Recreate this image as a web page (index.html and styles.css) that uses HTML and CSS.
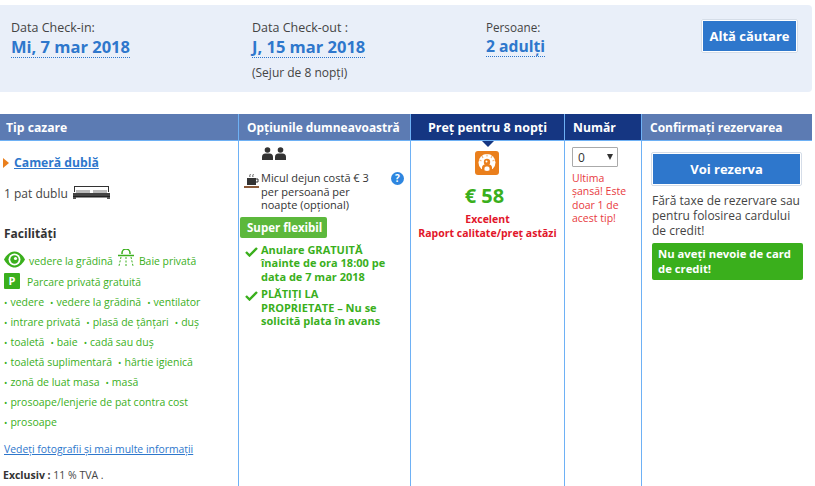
FILE: index.html
```html
<!DOCTYPE html>
<html lang="ro">
<head>
<meta charset="utf-8">
<title>Rezervare</title>
<link rel="stylesheet" href="styles.css">
</head>
<body>
<section class="search">
  <div class="s-col s-in"><div class="s-label">Data Check-in:</div><div class="s-val"><span>Mi, 7 mar 2018</span></div></div>
  <div class="s-col s-out"><div class="s-label">Data Check-out :</div><div class="s-val"><span>J, 15 mar 2018</span></div><div class="s-note">(Sejur de 8 nopți)</div></div>
  <div class="s-col s-pers"><div class="s-label">Persoane:</div><div class="s-val"><span>2 adulţi</span></div></div>
  <button class="btn btn-search">Altă căutare</button>
</section>
<section class="table">
  <div class="th c1">Tip cazare</div>
  <div class="th c2">Opțiunile dumneavoastră</div>
  <div class="th c3 dark">Preţ pentru 8 nopţi</div>
  <div class="th c4 dark">Număr</div>
  <div class="th c5">Confirmați rezervarea</div>

  <div class="td c1">
    <div class="room"><span class="tri"></span><a href="#">Cameră dublă</a></div>
    <div class="bed">1 pat dublu
      <svg class="bed-ico" width="39" height="14" viewBox="0 0 39 14"><path d="M2 1h35v6h-1V2H3v5H2z" fill="#333"/><path d="M4 5h14v3H4zM21 5h14v3H21z" fill="#bbb"/><path d="M1 8h37v3H1z" fill="#444"/><path d="M1 11h37v1.500H1z" fill="#222"/><path d="M1 12h3v2H1zM35 12h3v2h-3z" fill="#555"/></svg>
    </div>
    <h4 class="fac-title">Facilități</h4>
    <div class="fac-top">
      <svg class="eye" width="21" height="17" viewBox="0 0 21 17"><path d="M0 8.500C3 3 7 .5 10.500 .5S18 3 21 8.500c-3 5.500-7 8-10.500 8S3 14 0 8.500z" fill="#3aaf1c"/><circle cx="10.500" cy="8.500" r="6" fill="#fff"/><circle cx="10.500" cy="8.500" r="4.200" fill="#3aaf1c"/><circle cx="11.500" cy="7.500" r="1.600" fill="#fff"/></svg>
      <span>vedere la grădină</span>
      <svg class="shower" width="16" height="18" viewBox="0 0 16 18"><path d="M4 5V4a4 4 0 0 1 8 0v1" fill="none" stroke="#3aaf1c" stroke-width="1.500"/><path d="M0 6.500h16" stroke="#3aaf1c" stroke-width="1.500"/><path d="M3 8l-2 9M8 8v9M13 8l2 9" stroke="#3aaf1c" stroke-dasharray="2 1.500" fill="none"/></svg>
      <span>Baie privată</span>
    </div>
    <div class="fac-top park"><span class="p-badge">P</span><span>Parcare privată gratuită</span></div>
    <ul class="fac-list">
      <li><i>vedere</i><i>vedere la grădină</i><i>ventilator</i></li>
      <li><i>intrare privată</i><i>plasă de ţânţari</i><i>duş</i></li>
      <li><i>toaletă</i><i>baie</i><i>cadă sau duş</i></li>
      <li><i>toaletă suplimentară</i><i>hârtie igienică</i></li>
      <li><i>zonă de luat masa</i><i>masă</i></li>
      <li><i>prosoape/lenjerie de pat contra cost</i></li>
      <li><i>prosoape</i></li>
    </ul>
    <a class="more" href="#">Vedeți fotografii și mai multe informații</a>
    <div class="tax"><b>Exclusiv :</b> 11 % TVA .</div>
  </div>

  <div class="td c2">
    <div class="people">
      <svg width="24" height="14" viewBox="0 0 24 14"><circle cx="5.500" cy="3" r="2.800" fill="#333"/><path d="M0 13v-3a3.500 3.500 0 0 1 3.500-3.500h4A3.500 3.500 0 0 1 11 10v3z" fill="#333"/><circle cx="18.500" cy="3" r="2.800" fill="#333"/><path d="M13 13v-3a3.500 3.500 0 0 1 3.500-3.500h4A3.500 3.500 0 0 1 24 10v3z" fill="#333"/></svg>
    </div>
    <div class="breakfast">
      <svg class="cup" width="15" height="15" viewBox="0 0 15 15"><path d="M6 0c1 1-1 1 0 3M9 0c1 1-1 1 0 3" stroke="#555" fill="none"/><path d="M3 4h9v7H3z" fill="#333"/><path d="M12 5h2v3h-2" fill="none" stroke="#333"/><path d="M0 12h15v2H0z" fill="#8a5a3a"/></svg>
      <span class="b-text">Micul dejun costă € 3 per persoană per noapte (opţional)</span>
      <span class="help">?</span>
    </div>
    <div class="flex-badge">Super flexibil</div>
    <div class="perk"><svg class="check" width="13" height="11" viewBox="0 0 13 11"><path d="M1 6l3.500 3.500L12 2" fill="none" stroke="#3aaf1c" stroke-width="2.400"/></svg><span>Anulare GRATUITĂ înainte de ora 18:00 pe data de 7 mar 2018</span></div>
    <div class="perk"><svg class="check" width="13" height="11" viewBox="0 0 13 11"><path d="M1 6l3.500 3.500L12 2" fill="none" stroke="#3aaf1c" stroke-width="2.400"/></svg><span>PLĂTIȚI LA PROPRIETATE – Nu se solicită plata în avans</span></div>
  </div>

  <div class="td c3">
    <span class="notch"></span>
    <svg class="deal" width="24" height="24" viewBox="0 0 24 24"><rect width="24" height="24" rx="3" fill="#ea7f1c"/><circle cx="12" cy="11.500" r="8.500" fill="#fff"/><path d="M12 3.500v2M7 5l1 2M17 5l-1 2M4.500 9l2 1M19.500 9l-2 1" stroke="#f3b77d" stroke-width="1.200"/><circle cx="12" cy="11" r="3.200" fill="#ea7f1c"/><circle cx="11.500" cy="10.500" r="1" fill="#fff"/><path d="M7 20v-3.500C7 14.500 9 13 12 13s5 1.500 5 3.500V20h-2.500v-3c0-.8-1-1.500-2.500-1.500S9.500 16.200 9.500 17v3z" fill="#ea7f1c"/></svg>
    <div class="price">€ 58</div>
    <div class="excel">Excelent<br>Raport calitate/preț astăzi</div>
  </div>

  <div class="td c4">
    <div class="select"><span>0</span><span class="arrow"></span></div>
    <div class="last">Ultima șansă! Este doar 1 de acest tip!</div>
  </div>

  <div class="td c5">
    <button class="btn btn-book">Voi rezerva</button>
    <div class="nofee">Fără taxe de rezervare sau pentru folosirea cardului de credit!</div>
    <div class="nocard">Nu aveţi nevoie de card de credit!</div>
  </div>
</section>
</body>
</html>
```
FILE: styles.css
```css
* { box-sizing: border-box; }
html, body { height: 100%; }
body {
  margin: 0;
  padding-top: 5px;
  background: #fff;
  font-family: "Open Sans", "Noto Sans", sans-serif;
  font-size: 12px;
  color: #333;
  overflow: hidden;
}
.search {
  display: flex;
  width: 812px;
  height: 87px;
  background: #e9eff9;
  border-radius: 0 4px 4px 0;
  padding: 14px 14px 0 11px;
}
.s-col { flex: none; }
.s-in { width: 241px; }
.s-out { width: 234px; }
.s-pers { width: 215px; }
.s-pers .s-label { font-size: 11.700px; }
.s-pers .s-val { font-size: 15.700px; }
.s-label { font-size: 12.500px; line-height: 17px; color: #444; }
.s-val { font-size: 16.500px; font-weight: 700; line-height: 21px; color: #2e77cc; }
.s-val span { border-bottom: 1px dotted #2e77cc; display: inline-block; line-height: 20px; }
.s-note { font-size: 12px; line-height: 17px; margin-top: 6px; color: #444; }
.btn {
  background: #2e77cc;
  color: #fff;
  font: 700 13px "Open Sans", sans-serif;
  border: 2px solid #fff;
  outline: 1px solid #d5dde8;
  outline-offset: -1px;
  border-radius: 2px;
  padding: 0;
}
.btn-search { width: 98px; height: 34px; }
.table {
  display: grid;
  grid-template-columns: 238px 172px 154px 77px 171px;
  grid-template-rows: 27px 345px;
  width: 812px;
  margin-top: 22px;
}
.th {
  background: #5c7bb3;
  color: #fff;
  font-weight: 700;
  font-size: 12px;
  line-height: 27px;
  padding-left: 6px;
  border-bottom: 1px solid #6eb1f5;
  border-left: 1px solid #6eb1f5;
  white-space: nowrap;
  overflow: hidden;
}
.th.c1 { border-left: 0; font-size: 12.200px; }
.th.c2 { padding-left: 8px; font-size: 11.900px; }
.th.c3 { text-align: center; padding-left: 0; font-size: 12.500px; }
.th.c4 { padding-left: 8px; font-size: 12.200px; }
.th.c5 { padding-left: 8px; }
.th.dark { background: #153682; }
.td { border-left: 1px solid #6eb1f5; position: relative; overflow: hidden; }
.td.c1 { border-left: 0; padding: 13px 4px 0 3px; }
.td.c2 { padding: 6px 6px 0 1px; }
.td.c3 { text-align: center; padding-top: 7px; overflow: visible; }
.td.c4 { padding: 6px 6px 0 7px; }
.td.c5 { padding: 11px 9px 0 10px; }
.room { display: flex; align-items: center; gap: 5px; font-size: 12.200px; font-weight: 700; line-height: 17px; }
.room a { color: #2e77cc; }
.tri { width: 0; height: 0; border-left: 6px solid #ea7f1c; border-top: 5px solid transparent; border-bottom: 5px solid transparent; }
.bed { display: flex; align-items: center; gap: 4px; font-size: 12px; line-height: 18px; margin: 14px 0 0 1px; color: #444; }
.bed-ico { margin-top: -4px; }
.fac-title { font-size: 12px; line-height: 17px; margin: 22px 0 0 1px; font-weight: 700; color: #333; }
.fac-top { display: flex; align-items: center; font-size: 10.400px; color: #3aaf1c; margin-top: 10px; height: 18px; }
.fac-top .eye { margin: -3px 4px 0 1px; }
.fac-top .shower { margin: -6px 5px 0 5px; }
.park { margin-top: 3px; }
.p-badge { width: 16px; height: 16px; background: #3aaf1c; color: #fff; font-weight: 700; font-size: 11px; text-align: center; line-height: 16px; border-radius: 1px; margin: -2px 7px 0 1px; }
.fac-list { list-style: none; margin: 0; padding: 0; color: #3aaf1c; font-size: 10.500px; }
.fac-list li { height: 20px; line-height: 20px; white-space: nowrap; }
.fac-list li:first-child { margin-top: 1px; }
.fac-list i { font-style: normal; margin-right: 5px; }
.fac-list i::before { content: "•"; margin-right: 3px; font-size: 9px; margin-left: 1px; }
.more { display: block; font-size: 10.400px; line-height: 14px; color: #2e77cc; margin: 10px 0 0 1px; white-space: nowrap; }
.tax { font-size: 10.500px; line-height: 14px; margin-top: 12px; color: #444; white-space: nowrap; }
.tax b { color: #333; }
.people { padding-left: 22px; height: 14px; }
.people svg { display: block; }
.breakfast { display: flex; align-items: flex-start; margin-top: 10px; padding-left: 4px; position: relative; }
.cup { flex: none; margin: 3px 2px 0 0; }
.b-text { width: 118px; font-size: 11px; line-height: 13.500px; color: #333; }
.help { position: absolute; right: 0; top: 1px; width: 13px; height: 13px; border-radius: 50%; background: #2e86e0; color: #fff; font-size: 10px; font-weight: 700; text-align: center; line-height: 13px; }
.flex-badge { width: 87px; height: 21px; background: #5cb83c; color: #fff; font-size: 11.500px; font-weight: 700; line-height: 21px; padding-left: 7px; border-radius: 2px; margin-top: 5px; }
.perk { display: flex; align-items: flex-start; color: #3aaf1c; font-size: 11px; font-weight: 700; line-height: 13.500px; margin-top: 5px; padding-left: 5px; }
.perk .check { flex: none; margin: 3px 3px 0 0; }
.perk + .perk { margin-top: 4px; }
.perk span { width: 130px; }
.notch { position: absolute; top: 0; left: 71px; width: 0; height: 0; border-left: 6px solid transparent; border-right: 6px solid transparent; border-top: 6px solid #153682; }
.deal { display: block; margin: 3px auto 0; position: relative; left: -1px; }
.price { font-size: 20px; font-weight: 700; line-height: 24px; color: #3aaf1c; margin-top: 9px; position: relative; left: -3px; }
.excel { font-size: 10.500px; font-weight: 700; line-height: 13.500px; color: #e2162a; margin-top: 5px; white-space: nowrap; }
.select { display: flex; align-items: center; justify-content: space-between; width: 46px; height: 20px; border: 1px solid #aaa; border-radius: 1px; padding: 0 4px 0 5px; font-size: 12px; color: #333; }
.arrow { width: 0; height: 0; border-left: 3.500px solid transparent; border-right: 3.500px solid transparent; border-top: 6px solid #333; }
.last { font-size: 10.500px; line-height: 13.300px; color: #e83a40; margin-top: 5px; }
.btn-book { display: block; width: 151px; height: 34px; margin-left: -1px; }
.nofee { font-size: 12px; line-height: 15px; margin-top: 7px; color: #444; }
.nocard { background: #3aaf1c; color: #fff; font-size: 11.300px; font-weight: 700; line-height: 14.500px; padding: 4px 6px; border-radius: 2px; margin-top: 5px; }
```
